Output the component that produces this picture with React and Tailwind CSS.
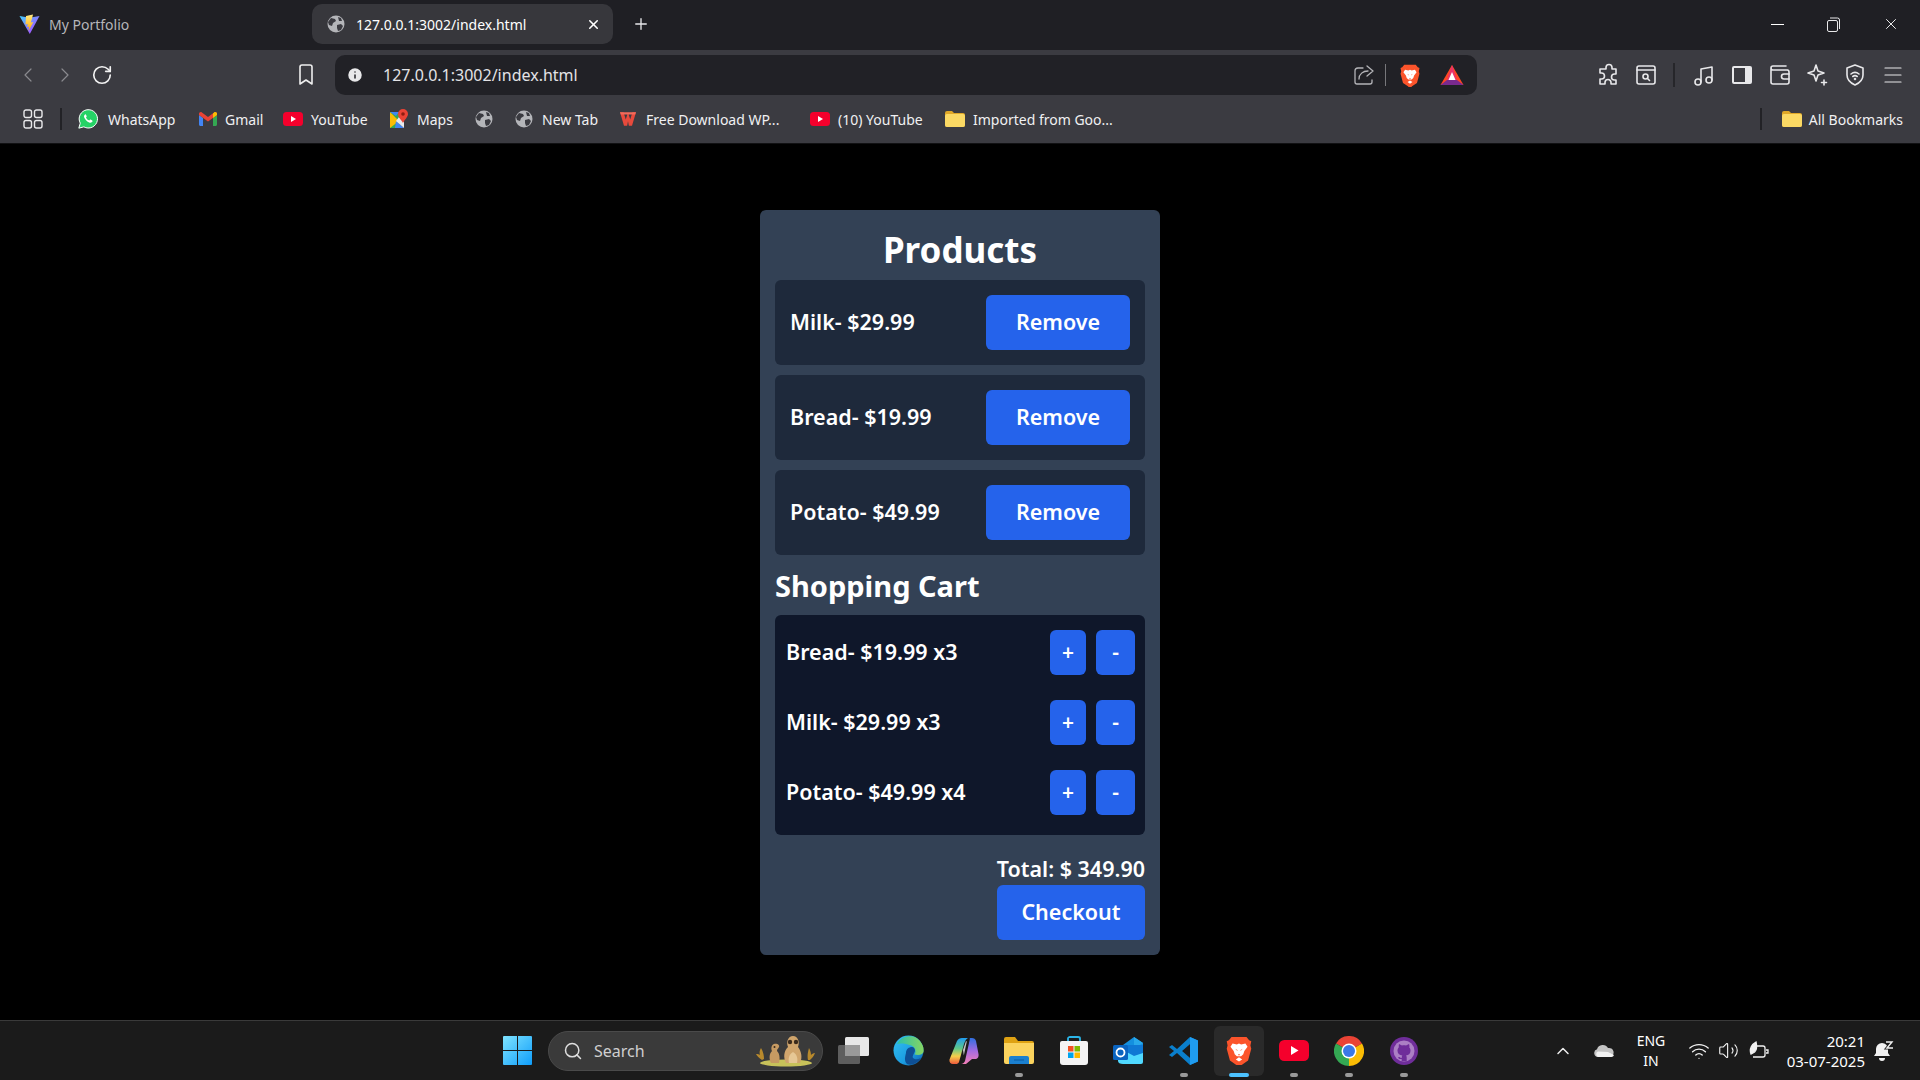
import {
  ChevronLeft,
  ChevronRight,
  ChevronUp,
  Info,
  Menu,
  Plus,
  RotateCw,
  Search,
  Volume2,
  Wifi,
  X,
} from "lucide-react";

const products = ["Milk- $29.99", "Bread- $19.99", "Potato- $49.99"];
const cartItems = ["Bread- $19.99 x3", "Milk- $29.99 x3", "Potato- $49.99 x4"];

const Globe = ({ size = 18 }) => (
  <svg width={size} height={size} viewBox="0 0 18 18">
    <circle cx="9" cy="9" r="8.5" fill="#b4b5b9" />
    <path d="M4 3l4 1 1 2-3 2-1 3-3-1-1-3zM10 10l4-1 2 2-2 4-3 1-1-3z" fill="#3a3a40" />
    <path d="M11 2l3 1 1 3-3 0z" fill="#3a3a40" />
  </svg>
);

const ViteLogo = () => (
  <svg width="21" height="21" viewBox="0 0 21 21">
    <defs>
      <linearGradient id="vite-a" x1="0" y1="0" x2="1" y2="1">
        <stop offset="0" stopColor="#41d1ff" />
        <stop offset="1" stopColor="#bd34fe" />
      </linearGradient>
      <linearGradient id="vite-b" x1="0" y1="0" x2="0" y2="1">
        <stop offset="0" stopColor="#ffea83" />
        <stop offset="1" stopColor="#ffa800" />
      </linearGradient>
    </defs>
    <path d="M0.5 2L10.5 3.8 20.5 2 10.8 20z" fill="url(#vite-a)" />
    <path d="M14 0.5L7 2l-.5 8.5 2.3-.5-.6 3 2-.5-.8 4.5 5-9-2.6.5 1.2-4z" fill="url(#vite-b)" />
  </svg>
);

const BraveLogo = ({ size = 20 }) => (
  <svg width={size} height={size * 1.15} viewBox="0 0 24 28">
    <path d="M5 1h14l2.500 3 2 1-.8 4 .8 3-3 11-6.500 4.500a2 2 0 0 1-4 0L3.500 23 .5 12l.8-3-.8-4 2-1z" fill="#fb542b" />
    <path d="M12 20l-3 2 3 2 3-2zM6 7l4 1 2-1 2 1 4-1 2 3-3 4-1 3-2 2h-4l-2-2-1-3-3-4z" fill="#fff" />
    <path d="M8.500 12l2 1v1zM15.500 12l-2 1v1zM11 17h2l-1 1.500z" fill="#fb542b" />
  </svg>
);

const BatTriangle = () => (
  <svg width="24" height="22" viewBox="0 0 24 22">
    <path d="M12 1L23.500 21H.5z" fill="#ff4724" />
    <path d="M.5 21L7 16h10l6.500 5z" fill="#7a2a8e" />
    <path d="M12 1l5 15H7z" fill="#e8326a" />
    <path d="M12 8l3.500 8h-7z" fill="#fff" />
  </svg>
);

const Outline = ({ children, size = 24 }) => (
  <svg width={size} height={size} viewBox="0 0 24 24" fill="none" stroke="#e8e8ea" strokeWidth="1.6" strokeLinecap="round" strokeLinejoin="round">
    {children}
  </svg>
);

const WhatsappLogo = () => (
  <svg width="21" height="22" viewBox="0 0 24 24">
    <path d="M1 23l1.700-6A11 11 0 1 1 7 21.400z" fill="#25d366" stroke="#fff" strokeWidth="1.200" />
    <path d="M8.500 6.500c-1 .5-1.700 2-1 3.800 1 2.600 3.500 5 6 6 1.800.6 3.200 0 3.800-1.200.3-.7.200-1.200-.2-1.400l-2-1c-.4-.2-.7 0-1 .4l-.6.700c-1.700-.6-3.200-2-3.900-3.700l.6-.7c.3-.3.300-.6.200-1L9.500 6.800c-.2-.4-.6-.5-1-.3z" fill="#fff" />
  </svg>
);

const GmailLogo = () => (
  <svg width="18" height="14" viewBox="0 0 18 14">
    <path d="M0 3v9.500C0 13.300.7 14 1.500 14H4V6z" fill="#4285f4" />
    <path d="M14 6v8h2.500c.8 0 1.500-.7 1.500-1.500V3z" fill="#34a853" />
    <path d="M0 3V1.800C0 .3 1.700-.5 2.900.4L9 5l6.100-4.600C16.300-.5 18 .3 18 1.800V3l-9 6.500z" fill="#ea4335" />
    <path d="M14 6V1.500L15.100.4C16.300-.5 18 .3 18 1.800V3z" fill="#fbbc04" />
  </svg>
);

const YoutubeLogo = ({ w = 20, h = 14 }) => (
  <svg width={w} height={h} viewBox="0 0 20 14">
    <rect width="20" height="14" rx="3.500" fill="#f5002c" />
    <path d="M8 4l5 3-5 3z" fill="#fff" />
  </svg>
);

const MapsLogo = () => (
  <svg width="18" height="20" viewBox="0 0 18 20">
    <path d="M0 3l9 0 0 16-9 0z" fill="#34a853" />
    <path d="M0 3l9 9-9 7z" fill="#fbbc04" />
    <path d="M0 3h9l-3 4z" fill="#4285f4" />
    <path d="M6 12l8 7H5z" fill="#4285f4" />
    <path d="M9 8l5 5v6L6 12z" fill="#e8eaed" />
    <path d="M13 0a5 5 0 0 1 5 5c0 3-3 5-5 9-1-3-5-5-5-9a5 5 0 0 1 5-5z" fill="#ea4335" />
    <circle cx="13" cy="5" r="1.800" fill="#8f1d12" />
  </svg>
);

const WpsLogo = () => (
  <svg width="16" height="14" viewBox="0 0 18 15">
    <path d="M0 0h4l2.500 8L9 0l2.500 8L14 0h4l-4.500 15H10L9 10l-1 5H4.500z" fill="#e84a3c" />
    <path d="M0 0h18l-1 2.500H1z" fill="#f26b5b" />
  </svg>
);

const FolderIcon = ({ w = 20, h = 16 }) => (
  <svg width={w} height={h} viewBox="0 0 20 16">
    <path d="M0 2a2 2 0 0 1 2-2h5l2 2h9a2 2 0 0 1 2 2v10a2 2 0 0 1-2 2H2a2 2 0 0 1-2-2z" fill="#e0a828" />
    <path d="M0 5a2 2 0 0 1 2-2h16a2 2 0 0 1 2 2v9a2 2 0 0 1-2 2H2a2 2 0 0 1-2-2z" fill="#fbd964" />
  </svg>
);

const bookmarks = [
  { w: "w-[120px]", gap: "ml-[10px]", icon: <WhatsappLogo />, label: "WhatsApp" },
  { w: "w-[85px]", gap: "ml-[7px]", icon: <GmailLogo />, label: "Gmail" },
  { w: "w-[106px]", gap: "ml-[8px]", icon: <YoutubeLogo />, label: "YouTube" },
  { w: "w-[85px]", gap: "ml-[8px]", icon: <MapsLogo />, label: "Maps" },
  { w: "w-[40px]", gap: "", icon: <Globe />, label: "" },
  { w: "w-[104px]", gap: "ml-[8px]", icon: <Globe />, label: "New Tab" },
  { w: "w-[192px]", gap: "ml-[8px]", icon: <WpsLogo />, label: "Free Download WP..." },
  { w: "w-[135px]", gap: "ml-[8px]", icon: <YoutubeLogo />, label: "(10) YouTube" },
  { w: "w-[190px]", gap: "ml-[8px]", icon: <FolderIcon />, label: "Imported from Goo..." },
];

function BrowserChrome() {
  return (
    <header className="shrink-0 text-[14px] text-[#e6e6e8]">
      <div className="flex h-[50px] items-center bg-[#1f1f24] pb-[2px]">
        <div className="ml-[19px] flex w-[293px] items-center gap-[9px] text-[#b6b6ba]">
          <ViteLogo />
          <span>My Portfolio</span>
        </div>
        <div className="flex h-[40px] w-[301px] items-center rounded-[10px] bg-[#37373c] pl-[15px] pr-[12px]">
          <Globe />
          <span className="ml-[11px] flex-1 text-white">127.0.0.1:3002/index.html</span>
          <X size={15} strokeWidth={2.5} color="#fff" />
        </div>
        <Plus className="ml-[19px]" size={18} strokeWidth={1.8} color="#e8e8ea" />
        <div className="ml-auto flex items-center">
          <div className="mr-[43px] h-px w-[13px] bg-white" />
          <svg className="mr-[42px]" width="13" height="15" viewBox="0 0 13 15" fill="none" stroke="#e8e8ea" strokeWidth="1">
            <rect x="0.5" y="3.500" width="10" height="11" rx="1.500" />
            <path d="M3 1h7.500A2 2 0 0 1 12.500 3v9" />
          </svg>
          <X className="mr-[20px]" size={18} strokeWidth={1.2} color="#fff" />
        </div>
      </div>

      <div className="flex h-[50px] items-center bg-[#3b3b41]">
        <ChevronLeft className="ml-[16px]" size={24} strokeWidth={1.2} color="#8a8a8e" />
        <ChevronRight className="ml-[13px]" size={24} strokeWidth={1.2} color="#8a8a8e" />
        <RotateCw className="ml-[14px]" size={22} strokeWidth={1.8} color="#f2f2f2" />
        <svg className="ml-[185px]" width="16" height="22" viewBox="0 0 16 22" fill="none" stroke="#eeeeee" strokeWidth="1.6" strokeLinejoin="round">
          <path d="M2 3a2 2 0 0 1 2-2h8a2 2 0 0 1 2 2v17l-6-4-6 4z" />
        </svg>
        <div className="ml-[21px] flex h-[40px] w-[1142px] items-center rounded-[10px] bg-[#212126] pl-[11px] pr-[13px]">
          <Info size={18} fill="#e8e8ea" color="#212126" strokeWidth={2} />
          <span className="ml-[19px] flex-1 text-[16px] text-[#e3e3e6]">127.0.0.1:3002/index.html</span>
          <svg width="20" height="20" viewBox="0 0 20 20" fill="none" stroke="#b4b4b8" strokeWidth="1.3" strokeLinecap="round" strokeLinejoin="round">
            <path d="M9 3H4a3 3 0 0 0-3 3v11a2 2 0 0 0 2 2h13a2 2 0 0 0 2-2v-2M5 14c0-5 4-8 9-8M13 1l6 5-6 5" />
          </svg>
          <div className="ml-[11px] h-[22px] w-px bg-[#77777b]" />
          <span className="ml-[14px] flex"><BraveLogo /></span>
          <span className="ml-[20px] flex"><BatTriangle /></span>
        </div>
        <div className="ml-[120px] flex items-center">
          <Outline>
            <path d="M9 4.500a3 3 0 0 1 6 0V6h4v5h-1.500a3 3 0 0 0 0 6H19v4h-5v-1.500a3 3 0 0 0-6 0V21H3v-5h1.500a3 3 0 0 0 0-6H3V6h6z" />
          </Outline>
          <span className="ml-[13px] flex">
            <Outline>
              <rect x="3" y="3" width="18" height="18" rx="2" />
              <path d="M3 7h18" />
              <circle cx="11.500" cy="13.500" r="2.500" />
              <path d="M13.500 15.500l2 2" />
            </Outline>
          </span>
          <div className="ml-[15px] h-[24px] w-[2px] bg-[#26262a]" />
          <span className="ml-[17px] flex">
            <Outline>
              <path d="M9 19V6l11-2v13" />
              <circle cx="6" cy="19" r="3" />
              <circle cx="17" cy="17" r="3" />
            </Outline>
          </span>
          <span className="ml-[14px] flex">
            <svg width="24" height="24" viewBox="0 0 24 24">
              <rect x="2" y="3" width="20" height="18" rx="2" fill="#e8e8ea" />
              <rect x="4" y="5" width="11" height="14" fill="#3b3b41" />
            </svg>
          </span>
          <span className="ml-[14px] flex">
            <Outline>
              <path d="M20 7H5a2 2 0 0 1-2-2 2 2 0 0 1 2-2h13M3 5v14a2 2 0 0 0 2 2h14a2 2 0 0 0 2-2V9a2 2 0 0 0-2-2" />
              <path d="M21 11h-5a2.500 2.500 0 0 0 0 5h5" />
            </Outline>
          </span>
          <span className="ml-[13px] flex">
            <Outline>
              <path d="M11 2l2 6 6 2-6 2-2 6-2-6-6-2 6-2z" />
              <path d="M19 17v5M16.500 19.500h5" />
            </Outline>
          </span>
          <span className="ml-[14px] flex">
            <Outline>
              <path d="M12 2l8 3v7c0 5-3.500 8-8 10-4.500-2-8-5-8-10V5z" />
              <path d="M8 11c2.400-2 5.600-2 8 0M9.800 13.500c1.300-1 3.100-1 4.400 0" />
              <circle cx="12" cy="16" r=".5" />
            </Outline>
          </span>
          <Menu className="ml-[14px]" size={24} strokeWidth={1.2} color="#e8e8ea" />
        </div>
      </div>

      <div className="flex h-[43px] items-center bg-[#3b3b41] pb-[5px]">
        <svg className="ml-[23px]" width="20" height="20" viewBox="0 0 20 20" fill="none" stroke="#e8e8ea" strokeWidth="1.4">
          <rect x="1" y="1" width="7.500" height="7.500" rx="2" />
          <rect x="11.500" y="1" width="7.500" height="7.500" rx="2" />
          <rect x="1" y="11.500" width="7.500" height="7.500" rx="2" />
          <rect x="11.500" y="11.500" width="7.500" height="7.500" rx="2" />
        </svg>
        <div className="ml-[17px] h-[22px] w-[2px] bg-[#222226]" />
        <div className="ml-[16px] flex items-center">
          {bookmarks.map((b, i) => (
            <div key={i} className={`${b.w} flex items-center`}>
              <span className="flex w-[20px] justify-center">{b.icon}</span>
              {b.label && <span className={`${b.gap} whitespace-nowrap text-[#f0f0f2]`}>{b.label}</span>}
            </div>
          ))}
        </div>
        <div className="ml-auto mr-[17px] flex items-center">
          <div className="mr-[20px] h-[22px] w-[2px] bg-[#222226]" />
          <FolderIcon />
          <span className="ml-[7px] whitespace-nowrap text-[#f0f0f2]">All Bookmarks</span>
        </div>
      </div>
      <div className="h-px bg-[#111113]" />
    </header>
  );
}

function Store() {
  return (
    <main className="flex flex-1 justify-center bg-black pt-[66px] text-white">
      <div className="flex h-[745px] w-[400px] flex-col rounded-[6px] bg-[#334155] px-[15px] pt-[15px] text-[21.5px] font-semibold">
        <h1 className="h-[55px] text-center text-[35px] font-bold leading-[50px]">Products</h1>
        <div className="flex flex-col gap-[10px]">
          {products.map((p) => (
            <div key={p} className="flex h-[85px] items-center justify-between rounded-[6px] bg-[#1e293b] pl-[15px] pr-[15px]">
              <span>{p}</span>
              <button className="h-[55px] w-[144px] rounded-[6px] bg-[#2563eb]">Remove</button>
            </div>
          ))}
        </div>
        <h2 className="mt-[10px] h-[50px] text-[29px] font-bold leading-[42px]">Shopping Cart</h2>
        <div className="flex flex-col gap-[25px] rounded-[6px] bg-[#0f172a] pb-[20px] pl-[11px] pr-[10px] pt-[15px]">
          {cartItems.map((item) => (
            <div key={item} className="flex items-center">
              <span className="flex-1">{item}</span>
              <button className="h-[45px] w-[36px] rounded-[6px] bg-[#2563eb] text-[21px]">+</button>
              <button className="ml-[10px] h-[45px] w-[39px] rounded-[6px] bg-[#2563eb] text-[21px]">-</button>
            </div>
          ))}
        </div>
        <div className="mt-[17px] h-[33px] text-right leading-[33px]">Total: $ 349.90</div>
        <button className="ml-auto h-[55px] w-[148px] rounded-[6px] bg-[#2563eb]">Checkout</button>
      </div>
    </main>
  );
}

const EdgeLogo = () => (
  <svg width="31" height="31" viewBox="0 0 31 31">
    <defs>
      <linearGradient id="edge-a" x1="0" y1="0" x2="1" y2="1">
        <stop offset="0" stopColor="#35c1f1" />
        <stop offset=".6" stopColor="#1b9de2" />
        <stop offset="1" stopColor="#0c59a4" />
      </linearGradient>
      <linearGradient id="edge-b" x1="0" y1="0" x2="1" y2="0">
        <stop offset="0" stopColor="#2cc0a8" />
        <stop offset="1" stopColor="#86d562" />
      </linearGradient>
    </defs>
    <circle cx="15.500" cy="15.500" r="15" fill="url(#edge-a)" />
    <path d="M4 9C8 1 20-2 27 6c3 4 4 7 3.500 11-1 3-5 3.500-9 2.500 2-3 1-7-3-9C12 8 7 8 4 9z" fill="url(#edge-b)" />
    <path d="M13 18c0-4 3-6 6-6 2 0 3 2 3 4-1 3-3 5-2 7 2 2 5 1.500 8 0-3 5-9 8-14 6-3-3-2-7-1-11z" fill="#0e4f95" />
  </svg>
);

const CopilotLogo = () => (
  <svg width="30" height="30" viewBox="0 0 30 30">
    <defs>
      <linearGradient id="cop-a" x1="0" y1="0" x2="0" y2="1">
        <stop offset="0" stopColor="#1f9cf0" />
        <stop offset=".4" stopColor="#5fc88a" />
        <stop offset=".7" stopColor="#f6cf4a" />
        <stop offset="1" stopColor="#ee5a3c" />
      </linearGradient>
      <linearGradient id="cop-b" x1="0" y1="0" x2="0" y2="1">
        <stop offset="0" stopColor="#2f6fe0" />
        <stop offset=".5" stopColor="#a56be0" />
        <stop offset="1" stopColor="#f47fb6" />
      </linearGradient>
    </defs>
    <path d="M8 5c1-2 3-3 5-3h6c-2 1-3 3-4 6l-5 18c-.5 1.500-2 2-3 2H4c-2.500 0-4-2-3.500-4.500z" fill="url(#cop-a)" />
    <path d="M20 2h3c2 0 3.500 1 4 3l2.500 13c.5 3-1 5-3.500 5h-3l-6 5h-5c2 0 3.500-1.500 4-3l4-18c.3-2 1.500-5 .5-5z" fill="url(#cop-b)" />
    <path d="M14 14l3-9 .8.5-3 14z" fill="#fff" opacity=".75" />
  </svg>
);

const StoreLogo = () => (
  <svg width="30" height="30" viewBox="0 0 30 30">
    <path d="M9 6V2.500C9 1.500 10 1 11 1h8c1 0 2 .5 2 1.500V6" fill="none" stroke="#2bb5e8" strokeWidth="1.8" />
    <path d="M1 7a2 2 0 0 1 2-2h24a2 2 0 0 1 2 2v19a3 3 0 0 1-3 3H4a3 3 0 0 1-3-3z" fill="#f4f4f4" />
    <rect x="9" y="10" width="5.500" height="5.500" fill="#f25022" />
    <rect x="15.500" y="10" width="5.500" height="5.500" fill="#7fba00" />
    <rect x="9" y="16.500" width="5.500" height="5.500" fill="#00a4ef" />
    <rect x="15.500" y="16.500" width="5.500" height="5.500" fill="#ffb900" />
  </svg>
);

const OutlookLogo = () => (
  <svg width="31" height="27" viewBox="0 0 31 27">
    <path d="M10 8L21 0l9 6v9H10z" fill="#1490df" />
    <path d="M21 0l9 6-9 6z" fill="#28a8ea" />
    <path d="M5 12l5-4h20v17a2 2 0 0 1-2 2H10c-3 0-5-1-5-3z" fill="#50d9ff" />
    <path d="M10 8l20 0 0 8-9 3-11-6z" fill="#0f78d4" />
    <rect x="0" y="8" width="15" height="15" rx="1.500" fill="#0a64c0" />
    <circle cx="7.500" cy="15.500" r="4" fill="none" stroke="#fff" strokeWidth="1.8" />
  </svg>
);

const VscodeLogo = () => (
  <svg width="30" height="30" viewBox="0 0 30 30">
    <path d="M21 1l8 3.500v21L21 29 8 17l-5 4-3-2 5-4-5-4 3-2 5 4z" fill="#0a7fcc" />
    <path d="M21 1l8 3.500v21L21 29l0-7-8-7 8-7z" fill="#1f9cf0" />
    <path d="M21 8L13 15l8 7z" fill="#1b1b1b" />
  </svg>
);

const ChromeLogo = () => (
  <svg width="30" height="30" viewBox="0 0 30 30">
    <path d="M15 15L2 7.500A15 15 0 0 1 28 7.500z" fill="#ea4335" />
    <path d="M15 15L15 30A15 15 0 0 1 2 7.500z" fill="#34a853" />
    <path d="M15 15L28 7.500A15 15 0 0 1 15 30z" fill="#fbbc04" />
    <circle cx="15" cy="15" r="7.500" fill="#fff" />
    <circle cx="15" cy="15" r="6" fill="#3b78e7" />
  </svg>
);

const GithubLogo = () => (
  <svg width="28" height="28" viewBox="0 0 28 28">
    <circle cx="14" cy="14" r="14" fill="#6f2d9a" />
    <circle cx="14" cy="14" r="10.500" fill="#ab7fc4" />
    <path d="M9 7l3 1.500c1.300-.3 2.700-.3 4 0L19 7c.5 1.500.5 2.500.3 3.500 1 1 1.200 2 1.200 3.200 0 3-2 4.500-4.500 4.800.6.600.7 1.200.7 2v3.500h-5v-2c-2.500.5-3.200-.7-3.700-1.800l1.700-.2c.5.800 1 1.200 2 1 0-.8.100-1.800.6-2.500-2.500-.3-4.800-1.800-4.800-4.800 0-1.200.3-2.200 1.200-3.200C9 9.500 8.500 8.500 9 7z" fill="#6f2d9a" />
  </svg>
);

const Meerkats = () => (
  <svg width="60" height="33" viewBox="0 0 60 33">
    <ellipse cx="30" cy="29" rx="26" ry="3.500" fill="#c8c25a" />
    <path d="M6 26c-3-2-5-4-6-6 2 0 3 0 4 1-1-3 0-5 1-7 2 3 3 7 3 11zM54 26c2-2 4-4 5-7-2 0-3 1-4 2 0-3-1-5-2-7-1 4-2 8-1 12z" fill="#b8892c" />
    <path d="M15 29c-2-4-2-9 1-12-1-2-1-6 2-7 3-1 6 1 5 3-1 2-2 2-2 4 3 3 3 8 2 12z" fill="#c69a62" />
    <path d="M30 29c-3-6-2-12 2-16-2-5 0-11 5-11 5 0 7 6 5 11 3 4 5 10 2 16z" fill="#d0a56c" />
    <path d="M33 29c-1-4 0-9 4-11 4 2 5 7 4 11z" fill="#e6c795" />
    <circle cx="34" cy="8" r="2.200" fill="#3a2a1c" />
    <circle cx="40" cy="8" r="2.200" fill="#3a2a1c" />
    <circle cx="18.500" cy="13" r="1" fill="#3a2a1c" />
  </svg>
);

function FolderTaskbar() {
  return (
    <svg width="30" height="27" viewBox="0 0 30 27">
      <path d="M0 2a2 2 0 0 1 2-2h9l3 4h14a2 2 0 0 1 2 2v19H0z" fill="#dfa213" />
      <path d="M0 6h30v19a2 2 0 0 1-2 2H2a2 2 0 0 1-2-2z" fill="#fbd35e" />
      <path d="M5 21a2 2 0 0 1 2-2h16a2 2 0 0 1 2 2v6H5z" fill="#1b80d0" />
      <path d="M10 23h10" stroke="#0b5aa0" strokeWidth="1" />
    </svg>
  );
}

const taskbarApps = [
  {
    icon: (
      <svg width="31" height="27" viewBox="0 0 31 27">
        <rect x="0" y="8" width="22" height="19" rx="1.500" fill="#5e5e5e" />
        <rect x="7" y="0" width="24" height="19" rx="1.500" fill="#e8e8e8" />
        <rect x="7" y="8" width="15" height="11" fill="#9a9a9a" />
      </svg>
    ),
  },
  { icon: <EdgeLogo /> },
  { icon: <CopilotLogo /> },
  { icon: <FolderTaskbar />, dot: true },
  { icon: <StoreLogo /> },
  { icon: <OutlookLogo /> },
  { icon: <VscodeLogo />, dot: true },
  { icon: <BraveLogo size={26} />, active: true },
  { icon: <YoutubeLogo w={30} h={21} />, dot: true },
  { icon: <ChromeLogo />, dot: true },
  { icon: <GithubLogo />, dot: true },
];

function Taskbar() {
  return (
    <footer className="flex h-[60px] shrink-0 items-center border-t border-[#3a3a3a] bg-[#1b1b1b] text-white">
      <svg className="ml-[503px]" width="29" height="29" viewBox="0 0 29 29">
        <defs>
          <linearGradient id="win-a" x1="0" y1="0" x2="1" y2="1">
            <stop offset="0" stopColor="#7fe4ff" />
            <stop offset="1" stopColor="#0f9dfa" />
          </linearGradient>
        </defs>
        <path d="M0 1a1 1 0 0 1 1-1h13v14H0zM15 0h13a1 1 0 0 1 1 1v13H15zM0 15h14v14H1a1 1 0 0 1-1-1zM15 15h14v13a1 1 0 0 1-1 1H15z" fill="url(#win-a)" />
      </svg>
      <div className="ml-[16px] flex h-[40px] w-[275px] items-center rounded-full border border-[#4a4a4a] bg-[#3a3a3a] pl-[14px]">
        <Search size={20} strokeWidth={1.8} color="#dedede" />
        <span className="ml-[11px] flex-1 text-[16px] text-[#cfcfcf]">Search</span>
        <span className="mr-[6px] flex"><Meerkats /></span>
      </div>
      <div className="ml-[3px] flex">
        {taskbarApps.map((app, i) => (
          <div key={i} className="relative flex h-[50px] w-[55px] items-center justify-center">
            {app.active && <div className="absolute left-[2.5px] top-0 h-[50px] w-[50px] rounded-[6px] bg-[#2a2a2a]" />}
            <span className="relative flex">{app.icon}</span>
            {app.dot && <div className="absolute bottom-[-1px] left-[23.5px] h-[4px] w-[8px] rounded-full bg-[#9a9a9a]" />}
            {app.active && <div className="absolute bottom-[-1px] left-[17.5px] h-[4px] w-[20px] rounded-full bg-[#4cc2ff]" />}
          </div>
        ))}
      </div>
      <ChevronUp className="ml-[122px]" size={20} strokeWidth={1.8} color="#eeeeee" />
      <svg className="ml-[21px]" width="20" height="13" viewBox="0 0 20 13">
        <path d="M4 13a4 4 0 0 1-1-7.800A6 6 0 0 1 14 4a4.500 4.500 0 0 1 2 9z" fill="#c4c4c4" />
        <path d="M4 13a3 3 0 0 1 0-5.500L14 8l6 3a3 3 0 0 1-3 2z" fill="#f2f2f2" />
      </svg>
      <div className="ml-[19px] w-[36px] text-center text-[14px] leading-[20px]">
        <div>ENG</div>
        <div>IN</div>
      </div>
      <Wifi className="ml-[19px]" size={22} strokeWidth={1.5} color="#f2f2f2" />
      <Volume2 className="ml-[8px]" size={21} strokeWidth={1.3} color="#f2f2f2" />
      <svg className="ml-[10px]" width="21" height="20" viewBox="0 0 21 20" fill="none" stroke="#f2f2f2" strokeWidth="1.3">
        <path d="M6 5h8a2 2 0 0 1 2 2v7a2 2 0 0 1-2 2H4M17 9h2v3h-2" />
        <path d="M2 13C0 8 3 3 7 1c1 4 1 9-3 11z" fill="#f2f2f2" />
      </svg>
      <div className="ml-[9px] w-[86px] text-right text-[15px] leading-[20px]">
        <div>20:21</div>
        <div>03-07-2025</div>
      </div>
      <svg className="ml-[9px]" width="20" height="20" viewBox="0 0 20 20">
        <path d="M8 2a6 6 0 0 0-6 6v4l-2 3h16l-2-3V8a6 6 0 0 0-6-6z" fill="#f2f2f2" />
        <path d="M5 17h6a3 3 0 0 1-6 0z" fill="#f2f2f2" />
        <path d="M12 1h6l-5 6h6" fill="none" stroke="#1b1b1b" strokeWidth="3" />
        <path d="M12 1h6l-5 6h6" fill="none" stroke="#f2f2f2" strokeWidth="1.4" />
      </svg>
    </footer>
  );
}

export default function App() {
  return (
    <div className="flex h-screen w-[1920px] flex-col overflow-hidden bg-black font-['Noto_Sans',sans-serif]">
      <BrowserChrome />
      <Store />
      <Taskbar />
    </div>
  );
}
